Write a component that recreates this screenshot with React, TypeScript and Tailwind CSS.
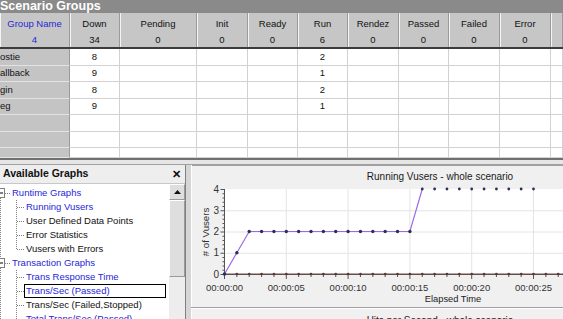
const COLUMNS = [
  { label: 'Group Name', count: '4', width: 'w-[70px]' },
  { label: 'Down', count: '34', width: 'w-[50px]' },
  { label: 'Pending', count: '0', width: 'w-[77px]' },
  { label: 'Init', count: '0', width: 'w-[51px]' },
  { label: 'Ready', count: '0', width: 'w-[50px]' },
  { label: 'Run', count: '6', width: 'w-[50px]' },
  { label: 'Rendez', count: '0', width: 'w-[51px]' },
  { label: 'Passed', count: '0', width: 'w-[50px]' },
  { label: 'Failed', count: '0', width: 'w-[51px]' },
  { label: 'Error', count: '0', width: 'w-[51px]' },
  { label: '', count: '', width: 'w-[12px]' },
]

const ROWS = [
  { name: 'ostie', down: '8', run: '2', h: 'h-[17px]' },
  { name: 'allback', down: '9', run: '1', h: 'h-[16px]' },
  { name: 'gin', down: '8', run: '2', h: 'h-[17px]' },
  { name: 'eg', down: '9', run: '1', h: 'h-[16px]' },
  { name: '', down: '', run: '', h: 'h-[17px]' },
  { name: '', down: '', run: '', h: 'h-[16px]' },
  { name: '', down: '', run: '', h: 'h-[10px]' },
]

type TreeItem = { label: string; parent?: boolean; blue?: boolean; last?: boolean; selected?: boolean }

const TREE: TreeItem[] = [
  { label: 'Runtime Graphs', parent: true, blue: true },
  { label: 'Running Vusers', blue: true },
  { label: 'User Defined Data Points' },
  { label: 'Error Statistics' },
  { label: 'Vusers with Errors', last: true },
  { label: 'Transaction Graphs', parent: true, blue: true },
  { label: 'Trans Response Time', blue: true },
  { label: 'Trans/Sec (Passed)', blue: true, selected: true },
  { label: 'Trans/Sec (Failed,Stopped)' },
  { label: 'Total Trans/Sec (Passed)', blue: true },
]

// chart geometry (relative to the chart panel)
const X0 = 33.5
const Y0 = 109
const PX = 12.36
const PY = 21.25
const PLOT_RIGHT = 491
const VUSERS = [0, 1, 2, 2, 2, 2, 2, 2, 2, 2, 2, 2, 2, 2, 2, 2, 4, 4, 4, 4, 4, 4, 4, 4, 4, 4]

function Connector({ item }: { item: TreeItem }) {
  if (item.parent) {
    return (
      <svg width="12" height="14" className="shrink-0">
        <rect x="-4.5" y="2.5" width="9" height="9" fill="#fff" stroke="#808080" />
        <line x1="-2" y1="7" x2="3" y2="7" stroke="#000" />
        <line x1="5" y1="7.5" x2="10" y2="7.5" stroke="#808080" strokeDasharray="1 1" />
        {item.label === 'Runtime Graphs' ? (
          <line x1="0.5" y1="12" x2="0.5" y2="14" stroke="#808080" strokeDasharray="1 1" />
        ) : (
          <>
            <line x1="0.5" y1="0" x2="0.5" y2="2" stroke="#808080" strokeDasharray="1 1" />
            <line x1="0.5" y1="12" x2="0.5" y2="14" stroke="#808080" strokeDasharray="1 1" />
          </>
        )}
      </svg>
    )
  }
  return (
    <svg width="26" height="14" className="shrink-0">
      <line x1="0.5" y1="0" x2="0.5" y2="14" stroke="#808080" strokeDasharray="1 1" />
      <line x1="16.5" y1="0" x2="16.5" y2={item.last ? 7 : 14} stroke="#808080" strokeDasharray="1 1" />
      <line x1="17" y1="7.5" x2="24" y2="7.5" stroke="#808080" strokeDasharray="1 1" />
    </svg>
  )
}

function Chart() {
  const xs = (t: number) => X0 + t * PX
  const ys = (v: number) => Y0 - v * PY
  // the line along the top edge is hidden, only the ramp shows
  const purple = VUSERS.slice(0, 17)
    .map((v, t) => `${xs(t)},${ys(v)}`)
    .join(' ')

  return (
    <svg width="498" height="154" className="shrink-0 font-['Liberation_Sans',Arial,sans-serif]">
      <rect x="0" y="0" width="498" height="154" fill="#f0f0f0" />
      <line x1="0" y1="0.5" x2="498" y2="0.5" stroke="#a0a0a0" />
      <line x1="0.5" y1="0" x2="0.5" y2="154" stroke="#ffffff" />

      <text x="249" y="14.5" fontSize="10" textAnchor="middle" fill="#1a1a1a">
        Running Vusers - whole scenario
      </text>

      <rect x={X0} y={ys(4)} width={PLOT_RIGHT - X0} height={Y0 - ys(4)} fill="#ffffff" />

      {[1, 2, 3].map((k) => (
        <line key={k} x1={X0} y1={ys(k) + 0.5} x2={PLOT_RIGHT} y2={ys(k) + 0.5} stroke="#e4e4e4" />
      ))}
      {[5, 10, 15, 20, 25, 30, 35].map((t) => (
        <line key={t} x1={xs(t)} y1={ys(4)} x2={xs(t)} y2={Y0} stroke="#e4e4e4" />
      ))}

      {/* axes */}
      <line x1={X0} y1={ys(4)} x2={X0} y2={Y0 + 1} stroke="#555" />
      <line x1={X0} y1={Y0 + 0.5} x2={PLOT_RIGHT} y2={Y0 + 0.5} stroke="#555" />
      {Array.from({ length: 21 }).map((_, i) => (
        <line
          key={i}
          x1={i % 5 === 0 ? X0 - 4 : X0 - 2}
          y1={Y0 - i * (PY / 5) + 0.5}
          x2={X0}
          y2={Y0 - i * (PY / 5) + 0.5}
          stroke="#555"
        />
      ))}
      {Array.from({ length: 28 }).map((_, t) => (
        <line key={t} x1={xs(t)} y1={Y0} x2={xs(t)} y2={Y0 + (t % 5 === 0 ? 5 : 3)} stroke="#555" />
      ))}

      {[0, 1, 2, 3, 4].map((k) => (
        <text key={k} x="28" y={ys(k) + 3.5} fontSize="10" textAnchor="end" fill="#333">
          {k}
        </text>
      ))}
      <text transform={`translate(17.5,67) rotate(-90)`} fontSize="9.7" textAnchor="middle" fill="#333">
        # of Vusers
      </text>

      {['00:00:00', '00:00:05', '00:00:10', '00:00:15', '00:00:20', '00:00:25'].map((l, i) => (
        <text key={l} x={xs(i * 5)} y="125.5" fontSize="9.5" textAnchor="middle" fill="#333">
          {l}
        </text>
      ))}
      <text x="262" y="136.5" fontSize="9.3" textAnchor="middle" fill="#1a1a1a">
        Elapsed Time
      </text>

      {/* series at zero */}
      <line x1={X0} y1={Y0} x2={PLOT_RIGHT} y2={Y0} stroke="#6b4a4a" />
      {Array.from({ length: 28 }).map((_, t) => (
        <circle key={t} cx={xs(t)} cy={Y0} r="1.3" fill="#5a3636" />
      ))}

      {/* running vusers */}
      <polyline points={purple} fill="none" stroke="#9b6be6" strokeWidth="1.2" />
      {VUSERS.map((v, t) => (
        <circle key={t} cx={xs(t)} cy={ys(v)} r={v === 4 ? 1.4 : 1.7} fill="#2e2c5c" />
      ))}

      <line x1="0" y1="142.5" x2="498" y2="142.5" stroke="#a0a0a0" />
      <line x1="0" y1="143.5" x2="498" y2="143.5" stroke="#ffffff" />
      <text x="249" y="159" fontSize="10" textAnchor="middle" fill="#1a1a1a">
        Hits per Second - whole scenario
      </text>
    </svg>
  )
}

export default function App() {
  return (
    <div className="w-[563px] h-[319px] overflow-hidden bg-[#e4e4e4] flex flex-col font-['Liberation_Sans',Arial,sans-serif] text-[9.5px] text-[#111]">
      {/* Scenario groups grid */}
      <div className="h-[13px] bg-[#8a8a8a] text-white font-bold text-[12.5px] leading-[13px] whitespace-nowrap">
        Scenario Groups
      </div>

      <div className="flex h-[34px] bg-[#c6c6c6]">
        {COLUMNS.map((c, i) => (
          <div
            key={i}
            className={`${c.width} shrink-0 flex flex-col items-center pt-[3px] leading-[16px] border-r border-[#9a9a9a] shadow-[inset_1px_0_0_#f4f4f4] ${i === 0 ? 'text-[#2626d8]' : 'text-[#111]'}`}
          >
            <span>{c.label}</span>
            <span>{c.count}</span>
          </div>
        ))}
      </div>
      <div className="h-[2px] bg-[#3c3c3c]" />

      {ROWS.map((r, ri) => (
        <div key={ri} className={`flex ${r.h}`}>
          {COLUMNS.map((c, i) => {
            const value = i === 0 ? r.name : i === 1 ? r.down : i === 5 ? r.run : ''
            return (
              <div
                key={i}
                className={`${c.width} shrink-0 flex items-center overflow-hidden whitespace-nowrap ${
                  i === 0
                    ? 'bg-[#c4c4c4] border-b border-[#e2e2e2] border-r border-r-[#9a9a9a]'
                    : 'bg-white justify-center border-b border-r border-[#d2d2d2]'
                }`}
              >
                {value}
              </div>
            )
          })}
        </div>
      ))}

      <div className="h-[2px] bg-[#707070]" />
      <div className="h-[4px] bg-[#e6e6e6]" />
      <div className="h-[1px] bg-[#a0a0a0]" />

      {/* bottom pane */}
      <div className="flex h-[154px]">
        <div className="w-[186px] shrink-0 flex flex-col border-r border-[#808080] bg-white">
          <div className="h-[19px] shrink-0 flex items-center justify-between bg-[#eeeeee] pl-[3px] pr-[4px] border-b border-[#c8c8c8]">
            <span className="font-bold text-[10.5px] text-[#111]">Available Graphs</span>
            <span className="font-bold text-[11px] leading-none text-[#111]">✕</span>
          </div>
          <div className="flex flex-1 min-h-0">
            <div className="w-[169px] shrink-0 pt-[2px] overflow-hidden">
              {TREE.map((item) => (
                <div key={item.label} className="flex h-[14px] items-center whitespace-nowrap">
                  <Connector item={item} />
                  {item.selected ? (
                    <span className="flex-1 mr-[3px] h-[14px] leading-[12px] border border-black pl-[1px] -ml-[2px] text-[#2626d8]">
                      {item.label}
                    </span>
                  ) : (
                    <span className={item.blue ? 'text-[#2626d8]' : 'text-[#111]'}>{item.label}</span>
                  )}
                </div>
              ))}
            </div>
            <div className="w-[16px] shrink-0 flex flex-col bg-[#ededed]">
              <div className="h-[16px] flex items-center justify-center bg-[#dedede] border-t border-l border-white border-r border-b border-r-[#9a9a9a] border-b-[#9a9a9a]">
                <svg width="7" height="4" viewBox="0 0 7 4">
                  <path d="M3.5 0 L7 4 L0 4 Z" fill="#111" />
                </svg>
              </div>
              <div className="h-[77px] bg-[#dedede] border-t border-l border-white border-r border-b border-r-[#9a9a9a] border-b-[#9a9a9a]" />
            </div>
          </div>
        </div>
        <div className="w-[5px] shrink-0 bg-[#d6d6d6]" />
        <div className="flex-1 min-w-0 overflow-hidden">
          <Chart />
        </div>
      </div>
    </div>
  )
}
